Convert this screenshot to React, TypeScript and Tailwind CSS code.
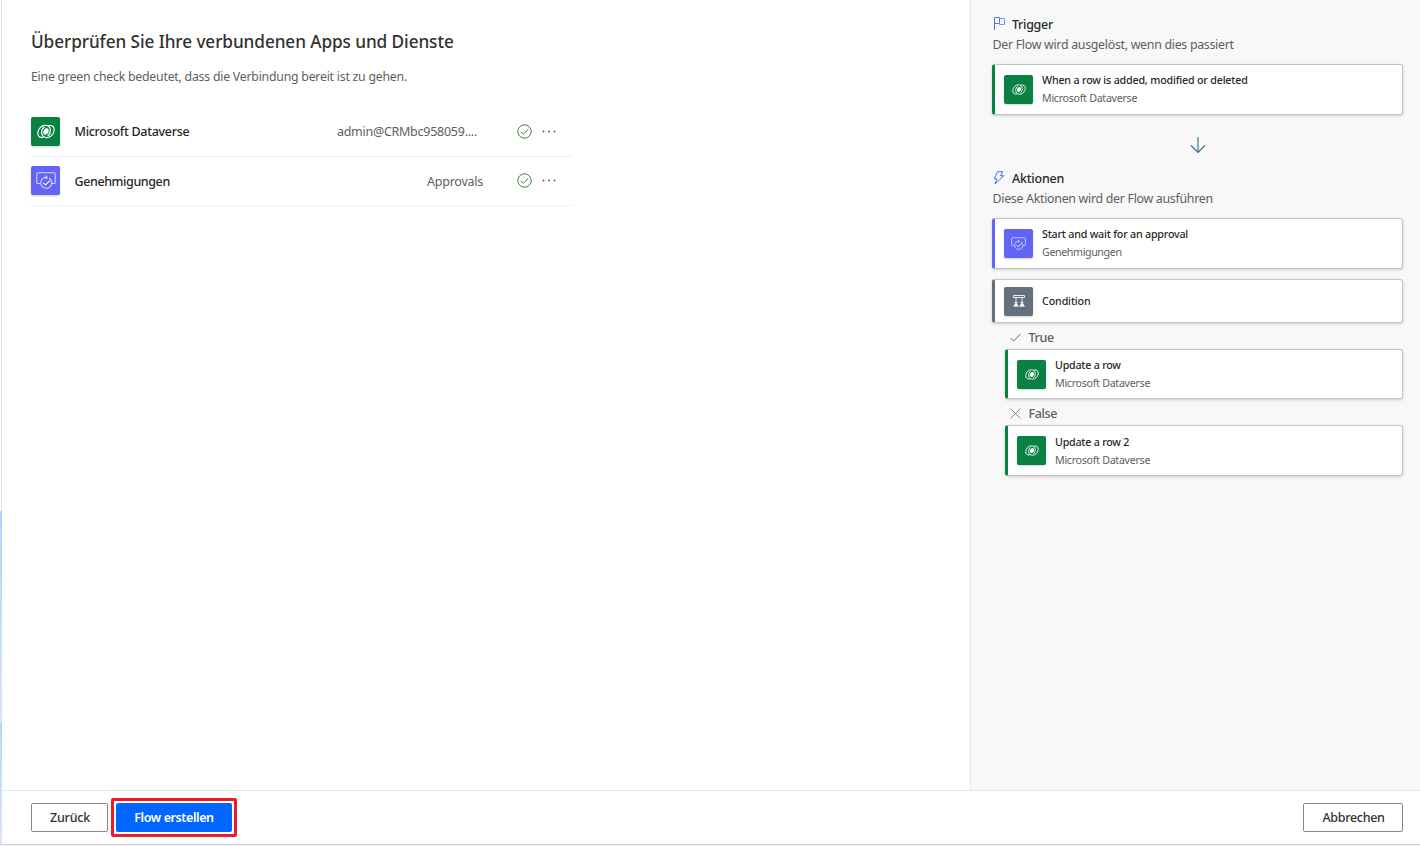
import type { ReactNode } from 'react';

type IconProps = { className?: string };

function DataverseIcon({ className }: IconProps) {
  return (
    <svg viewBox="0 0 20 16" fill="none" stroke="#fff" strokeWidth="1.3" strokeLinecap="round" className={className}>
      <path d="M6.500 14.500C2.800 15.300.7 12.800.9 9.600 1.200 5 4.800 1.100 9.200 1.100c3.200 0 5.600 2 5.600 5.400 0 2.700-.9 5-2.600 6.200" />
      <path d="M13.500 1.500c3.700-.8 5.800 1.700 5.600 4.900-.3 4.600-3.900 8.500-8.300 8.500-3.200 0-5.600-2-5.600-5.400 0-2.700.9-5 2.600-6.200" />
      <path d="M7.800 6.200c1.200-2 3.400-2.400 4.500-1.200 1.100 1.200.9 3.300-.1 4.800-1.200 2-3.400 2.400-4.500 1.200-1.100-1.200-.9-3.300.1-4.800z" fill="#fff" stroke="none" />
    </svg>
  );
}

function ApprovalIcon({ className }: IconProps) {
  return (
    <svg viewBox="0 0 20 17" fill="none" stroke="#d5d5ff" strokeWidth="1.100" className={className}>
      <path d="M4.300 11.500H2.200C1.200 11.500.8 11 .8 10.200V2C.8 1.200 1.300.8 2.100.8h15.800c.8 0 1.300.4 1.300 1.200v8.200c0 .8-.4 1.300-1.300 1.300h-2" />
      <path d="M13.200 6.200A5.500 5.500 0 1 1 8 5.800l2.500-.6M9.200 3.600l2 1.700-1.500 2" />
      <path d="m7.400 10.800 2.100 2.100 4.300-4.300" stroke="#fff" />
    </svg>
  );
}

function ConditionIcon({ className }: IconProps) {
  return (
    <svg viewBox="0 0 14 14" fill="none" stroke="#e8eaec" strokeWidth="1" className={className}>
      <path d="M1.500 1.500h11v2h-11zM4 3.500v6M10 3.500v6M2.500 8.500h3M8.500 8.500h3" />
      <path d="M3 9.500h2l1.500 3h-5zM9 9.500h2l1.500 3h-5z" fill="#fff" strokeWidth=".4" />
    </svg>
  );
}

function FlagIcon() {
  return (
    <svg viewBox="0 0 13 13" width="13" height="13" fill="none" strokeWidth="1">
      <path d="M1.500 13V.5h5v6h-5" stroke="#5b6bf5" />
      <path d="M6.500 1.500h5v6h-5v-1" stroke="#5ea0f5" />
    </svg>
  );
}

function BoltIcon() {
  return (
    <svg viewBox="0 0 12 14" width="12" height="14" fill="none" stroke="#3f6df0" strokeWidth="1" strokeLinejoin="round">
      <path d="M4.500.7h5.200L7.500 4.800h3.300L2 13l2-5.200H1.300z" />
    </svg>
  );
}

function StatusIcon() {
  return (
    <svg viewBox="0 0 15 15" width="15" height="15" fill="none" stroke="#3a803a" strokeWidth="1">
      <circle cx="7.500" cy="7.500" r="6.700" />
      <path d="m3.800 7.800 2.500 2.400 5-4.900" />
    </svg>
  );
}

function MoreIcon() {
  return (
    <svg viewBox="0 0 14 3" width="14" height="3" fill="#555">
      <circle cx="1.500" cy="1.500" r=".9" />
      <circle cx="7" cy="1.500" r=".9" />
      <circle cx="12.500" cy="1.500" r=".9" />
    </svg>
  );
}

const icons = {
  dataverse: { Icon: DataverseIcon, bg: 'bg-[#088142]', large: 'h-[15px] w-[18px]', small: 'h-[11px] w-3.5' },
  approval: { Icon: ApprovalIcon, bg: 'bg-[#6264f4]', large: 'h-[17px] w-5', small: 'h-[13px] w-[15px]' },
  condition: { Icon: ConditionIcon, bg: 'bg-[#64707c]', large: 'size-3.5', small: 'size-3.5' },
};

type Kind = keyof typeof icons;

function ConnectorTile({ kind, large }: { kind: Kind; large?: boolean }) {
  const { Icon, bg, ...size } = icons[kind];
  return (
    <div className={`flex size-[29px] shrink-0 items-center justify-center rounded-[2px] shadow-[0_1px_2px_rgba(0,0,0,0.18)] ${bg}`}>
      <Icon className={large ? size.large : size.small} />
    </div>
  );
}

function ConnectionRow({ kind, name, nameClass, account, accountClass }: {
  kind: Kind;
  name: string;
  nameClass: string;
  account: string;
  accountClass: string;
}) {
  return (
    <li className="flex h-[49.500px] items-center border-b border-[#f1f1f1]">
      <ConnectorTile kind={kind} large />
      <span className={`ml-[14.500px] text-[12.500px] font-medium text-[#292827] ${nameClass}`}>{name}</span>
      <span className={`ml-auto text-[12.500px] text-[#605e5c] ${accountClass}`}>{account}</span>
      <StatusIcon />
      <span className="mr-4 ml-[10.500px]">
        <MoreIcon />
      </span>
    </li>
  );
}

function SectionHeader({ icon, title, titleClass, text }: {
  icon: ReactNode;
  title: string;
  titleClass: string;
  text: string;
}) {
  return (
    <div>
      <div className="flex h-5 items-center">
        <span className="w-5 pb-px pl-px">{icon}</span>
        <h2 className={`pt-[2px] text-[12.500px] font-medium text-[#292827] ${titleClass}`}>{title}</h2>
      </div>
      <p className="h-5 pl-[0.500px] text-[12.400px] leading-[22px] tracking-[-0.3px] text-[#605e5c]">{text}</p>
    </div>
  );
}

const accents = {
  dataverse: 'border-l-[#088142]',
  approval: 'border-l-[#6264f4]',
  condition: 'border-l-[#64707c]',
};

function StepCard({ kind, title, titleClass = '', connector, connectorClass = '', textClass = '', height }: {
  kind: Kind;
  title: string;
  titleClass?: string;
  connector?: string;
  connectorClass?: string;
  textClass?: string;
  height: string;
}) {
  return (
    <div
      className={`flex items-center rounded-[3px] border border-l-[3px] border-[#c4c4c4] bg-white pl-[9px] shadow-[0_1px_3px_rgba(0,0,0,0.18)] ${accents[kind]} ${height}`}
    >
      <ConnectorTile kind={kind} />
      <div className={`ml-[9px] text-[10.700px] leading-[18px] ${textClass}`}>
        <div className={`font-medium text-[#292827] ${titleClass}`}>{title}</div>
        {connector && <div className={`text-[#605e5c] ${connectorClass}`}>{connector}</div>}
      </div>
    </div>
  );
}

function BranchLabel({ icon, label }: { icon: ReactNode; label: string }) {
  return (
    <div className="flex h-[26px] items-center pt-[3px] pl-[5px]">
      <span className="w-[18px]">{icon}</span>
      <span className="pt-[2px] pl-[0.500px] text-[12.500px] font-medium tracking-[-0.35px] text-[#605e5c]">{label}</span>
    </div>
  );
}

export default function App() {
  return (
    <div className="flex h-[846px] w-[1420px] flex-col overflow-hidden bg-white font-['Noto_Sans',sans-serif]">
      <div className="flex h-[844px]">
        <div className="flex w-[2px] flex-col">
          <div className="h-[511px] border-r border-[#e3e3e3]" />
          <div className="h-[211px] bg-linear-to-b from-[#b5d0fb] to-[#d8e4fb]" />
          <div className="flex-1 bg-linear-to-b from-[#bcd4fb] to-[#d8e4fb]" />
        </div>
        <div className="flex flex-1 flex-col">
          <div className="flex h-[790px]">
            <main className="flex-1 pt-[27px] pl-[29px]">
              <h1 className="h-[29px] text-[17.200px] leading-[29px] font-medium tracking-[-0.08px] text-[#323130]">
                Überprüfen Sie Ihre verbundenen Apps und Dienste
              </h1>
              <p className="mt-[11px] h-5 text-[12.300px] leading-5 tracking-[-0.23px] text-[#605e5c]">
                Eine green check bedeutet, dass die Verbindung bereit ist zu gehen.
              </p>
              <ul className="mt-5 w-[541px]">
                <ConnectionRow
                  kind="dataverse"
                  name="Microsoft Dataverse"
                  nameClass="pt-[2px] tracking-[-0.29px]"
                  account="admin@CRMbc958059...."
                  accountClass="mr-[39.500px] pt-[2px] tracking-[-0.26px]"
                />
                <ConnectionRow
                  kind="approval"
                  name="Genehmigungen"
                  nameClass="pt-[3px] tracking-[-0.4px]"
                  account="Approvals"
                  accountClass="mr-[33.500px] pt-[3px] tracking-[-0.25px]"
                />
              </ul>
            </main>
            <aside className="w-[450px] border-l border-[#e5e5e5] bg-[#f8f8f8] pt-3.5 pr-[17px] pl-[21px]">
              <SectionHeader
                icon={<FlagIcon />}
                title="Trigger"
                titleClass="tracking-[-0.3px]"
                text="Der Flow wird ausgelöst, wenn dies passiert"
              />
              <div className="mt-2.5">
                <StepCard
                  kind="dataverse"
                  title="When a row is added, modified or deleted"
                  titleClass="tracking-[-0.18px]"
                  connector="Microsoft Dataverse"
                  connectorClass="tracking-[-0.3px]"
                  textClass="pb-[2px]"
                  height="h-[51px]"
                />
              </div>
              <div className="flex h-[53px] justify-center pt-[22px]">
                <svg viewBox="0 0 16 17" width="16" height="17" fill="none" stroke="#2c6e93" strokeWidth="1.100">
                  <path d="M8 0v15.500M1 8.500l7 7 7-7" />
                </svg>
              </div>
              <SectionHeader
                icon={<BoltIcon />}
                title="Aktionen"
                titleClass="tracking-[-0.22px]"
                text="Diese Aktionen wird der Flow ausführen"
              />
              <div className="mt-2.5 flex flex-col gap-2.5">
                <StepCard
                  kind="approval"
                  title="Start and wait for an approval"
                  titleClass="tracking-[-0.2px]"
                  connector="Genehmigungen"
                  connectorClass="tracking-[-0.4px]"
                  textClass="pb-[2px]"
                  height="h-[51px]"
                />
                <StepCard kind="condition" title="Condition" titleClass="tracking-[-0.13px]" height="h-11" />
              </div>
              <div className="pl-[13px]">
                <BranchLabel
                  icon={
                    <svg viewBox="0 0 11 9" width="11" height="9" fill="none" stroke="#4f7a5f">
                      <path d="m.5 5 3 3 7-7" />
                    </svg>
                  }
                  label="True"
                />
                <StepCard
                  kind="dataverse"
                  title="Update a row"
                  titleClass="tracking-[-0.22px]"
                  connector="Microsoft Dataverse"
                  connectorClass="tracking-[-0.3px]"
                  height="h-[50px]"
                />
                <BranchLabel
                  icon={
                    <svg viewBox="0 0 11 11" width="11" height="11" fill="none" stroke="#a08060">
                      <path d="m.5.5 10 10M10.500.5l-10 10" />
                    </svg>
                  }
                  label="False"
                />
                <StepCard
                  kind="dataverse"
                  title="Update a row 2"
                  titleClass="tracking-[-0.22px]"
                  connector="Microsoft Dataverse"
                  connectorClass="tracking-[-0.3px]"
                  height="h-[51px]"
                />
              </div>
            </aside>
          </div>
          <footer className="flex flex-1 items-center border-t border-[#e5e5e5] pr-[17px] pl-[29px] text-[12.500px] text-[#323130]">
            <button className="h-[29px] w-[77px] rounded-[2px] border border-[#8a8886] pt-[2px] pl-px font-medium tracking-[-0.17px]">
              Zurück
            </button>
            <div className="ml-[3px] rounded-[2px] border-[3px] border-[#ee1c25] p-[2px]">
              <button className="block h-[29px] w-[116px] rounded-[2px] bg-[#0066ff] pt-[2px] font-semibold tracking-[-0.4px] text-white">
                Flow erstellen
              </button>
            </div>
            <button className="ml-auto h-[29px] w-[100px] rounded-[2px] border border-[#8a8886] pt-[2px] pl-px font-medium tracking-[-0.3px]">
              Abbrechen
            </button>
          </footer>
        </div>
      </div>
      <div className="h-[2px] border-t border-[#d2d2d2] bg-[#f0f0f0]" />
    </div>
  );
}
